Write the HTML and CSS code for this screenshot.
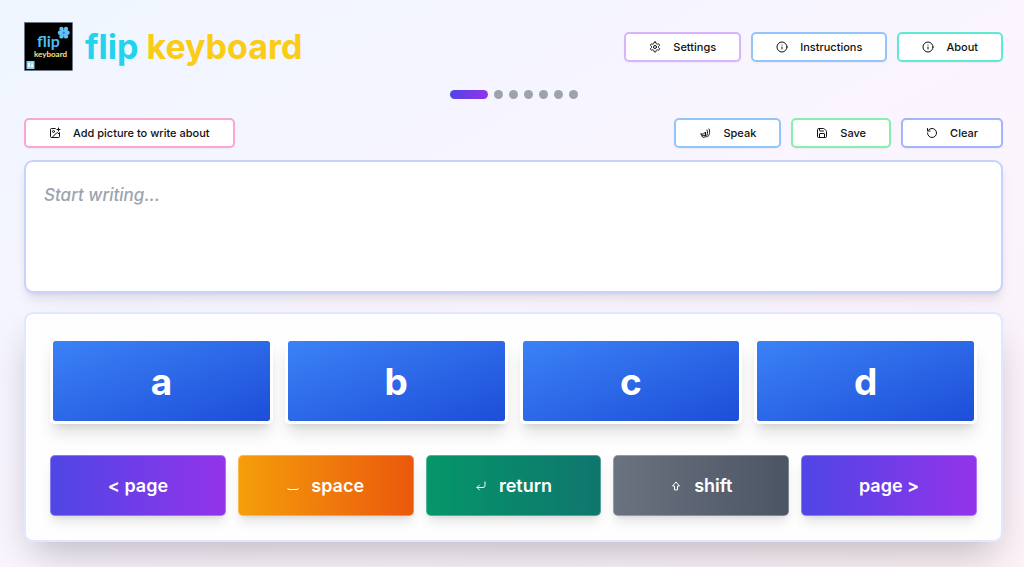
FILE: index.html
```html
<!DOCTYPE html>
<html lang="en">
<head>
  <meta charset="UTF-8">
  <meta name="viewport" content="width=device-width, initial-scale=1">
  <title>flip keyboard</title>
  <link rel="stylesheet" href="styles.css">
</head>
<body>

  <header>
    <div class="brand">
      <svg class="logo" viewBox="0 0 49 49" role="img" aria-label="flip keyboard logo">
        <rect x=".5" y=".5" width="48" height="48" fill="#000" stroke="#64748b" stroke-width=".6"/>
        <g fill="#60c3f5">
          <circle cx="37.5" cy="7" r="2.2"/>
          <circle cx="42" cy="7" r="2.2"/>
          <circle cx="43.500" cy="10.800" r="2.2"/>
          <circle cx="42" cy="14.400" r="2.2"/>
          <circle cx="37.500" cy="14.400" r="2.2"/>
          <circle cx="36" cy="10.800" r="2.2"/>
          <circle cx="39.800" cy="10.800" r="3"/>
        </g>
        <circle cx="39.800" cy="10.800" r="1.200" fill="#6366f1"/>
        <text class="logo-flip" x="13" y="25">flip</text>
        <text class="logo-keyboard" x="10" y="35">keyboard</text>
        <rect x="2.500" y="39" width="8" height="8" fill="#8ed3f7"/>
        <path d="M4 45V41h2v4zM7 45l1-5 1.500 5z" fill="#fff"/>
        <path d="M5 46l1-2 1 2z" fill="#f0c46a"/>
      </svg>
      <h1><span class="flip">flip</span> <span class="keyboard">keyboard</span></h1>
    </div>
    <nav class="controls">
      <button type="button" class="btn purple">
        <svg class="icon" viewBox="0 0 24 24"><path d="M12.220 2h-.44a2 2 0 0 0-2 2v.18a2 2 0 0 1-1 1.730l-.43.25a2 2 0 0 1-2 0l-.15-.08a2 2 0 0 0-2.730.73l-.22.38a2 2 0 0 0 .73 2.730l.15.1a2 2 0 0 1 1 1.720v.51a2 2 0 0 1-1 1.740l-.15.09a2 2 0 0 0-.73 2.730l.22.38a2 2 0 0 0 2.730.73l.15-.08a2 2 0 0 1 2 0l.43.25a2 2 0 0 1 1 1.730V20a2 2 0 0 0 2 2h.44a2 2 0 0 0 2-2v-.18a2 2 0 0 1 1-1.730l.43-.25a2 2 0 0 1 2 0l.15.08a2 2 0 0 0 2.730-.73l.22-.39a2 2 0 0 0-.73-2.730l-.15-.08a2 2 0 0 1-1-1.740v-.5a2 2 0 0 1 1-1.740l.15-.09a2 2 0 0 0 .73-2.730l-.22-.38a2 2 0 0 0-2.730-.73l-.15.08a2 2 0 0 1-2 0l-.43-.25a2 2 0 0 1-1-1.730V4a2 2 0 0 0-2-2z"/><circle cx="12" cy="12" r="3"/></svg>
        Settings
      </button>
      <button type="button" class="btn blue">
        <svg class="icon" viewBox="0 0 24 24"><circle cx="12" cy="12" r="10"/><path d="M12 16v-4M12 8h.01"/></svg>
        Instructions
      </button>
      <button type="button" class="btn teal">
        <svg class="icon" viewBox="0 0 24 24"><circle cx="12" cy="12" r="10"/><path d="M12 16v-4M12 8h.01"/></svg>
        About
      </button>
    </nav>
  </header>

  <main>
    <!-- Page indicator -->
    <div class="dots">
      <span class="active"></span><span></span><span></span><span></span><span></span><span></span><span></span>
    </div>

    <div class="toolbar">
      <button type="button" class="btn pink">
        <svg class="icon" viewBox="0 0 24 24"><path d="M16 5h6M19 2v6M21 11.500V19a2 2 0 0 1-2 2H5a2 2 0 0 1-2-2V5a2 2 0 0 1 2-2h7.500"/><path d="m21 15-3.090-3.090a2 2 0 0 0-2.820 0L6 21"/><circle cx="9" cy="9" r="2"/></svg>
        Add picture to write about
      </button>
      <div class="controls">
        <button type="button" class="btn blue">
          <svg class="icon" viewBox="0 0 24 24"><path d="M4 14h5l4-4v6c0 3-2 5-4 5s-3-2-3-4M4 14l3 4 6-2M16 6c2 5 1 10-2 14M20 4c3 6 1 12-3 16"/></svg>
          Speak
        </button>
        <button type="button" class="btn green">
          <svg class="icon" viewBox="0 0 24 24"><path d="M15.200 3a2 2 0 0 1 1.400.6l3.800 3.800a2 2 0 0 1 .6 1.400V19a2 2 0 0 1-2 2H5a2 2 0 0 1-2-2V5a2 2 0 0 1 2-2z"/><path d="M17 21v-7a1 1 0 0 0-1-1H8a1 1 0 0 0-1 1v7M7 3v4a1 1 0 0 0 1 1h7"/></svg>
          Save
        </button>
        <button type="button" class="btn indigo">
          <svg class="icon" viewBox="0 0 24 24"><path d="M3 12a9 9 0 1 0 9-9 9.750 9.750 0 0 0-6.740 2.740L3 8"/><path d="M3 3v5h5"/></svg>
          Clear
        </button>
      </div>
    </div>

    <textarea aria-label="Your writing" placeholder="Start writing..."></textarea>

    <section class="panel">
      <div class="letters">
        <button type="button">a</button>
        <button type="button">b</button>
        <button type="button">c</button>
        <button type="button">d</button>
      </div>
      <div class="actions">
        <button type="button" class="page">&lt; page</button>
        <button type="button" class="space">
          <svg class="icon" viewBox="0 0 24 24"><path d="M22 17v1c0 .5-.5 1-1 1H3c-.5 0-1-.5-1-1v-1"/></svg>
          space
        </button>
        <button type="button" class="return">
          <svg class="icon" viewBox="0 0 24 24"><path d="M20 4v7a4 4 0 0 1-4 4H4"/><path d="m9 10-5 5 5 5"/></svg>
          return
        </button>
        <button type="button" class="shift">
          <svg class="icon" viewBox="0 0 24 24"><path d="M9 19v-7H5l7-8 7 8h-4v7z"/></svg>
          shift
        </button>
        <button type="button" class="page">page &gt;</button>
      </div>
    </section>
  </main>

</body>
</html>
```
FILE: styles.css
```css
* { box-sizing: border-box; }
body {
  margin: 0;
  min-height: 100vh;
  padding: 22px 21px 26px 24px;
  font-family: Inter, "Liberation Sans", sans-serif;
  background: linear-gradient(to bottom right, #eff6ff, #faf5ff, #fdf2f8);
  color: #111;
}
button, textarea { font-family: inherit; }
button {
  display: flex;
  align-items: center;
  justify-content: center;
  gap: 12px;
  cursor: pointer;
}
.icon {
  width: 12px;
  height: 12px;
  flex: none;
  fill: none;
  stroke: currentColor;
  stroke-width: 2;
  stroke-linecap: round;
  stroke-linejoin: round;
}
header, .toolbar {
  display: flex;
  flex-wrap: wrap;
  align-items: center;
  justify-content: space-between;
  gap: 12px;
}
.brand {
  display: flex;
  align-items: center;
  gap: 12px;
}
.logo {
  width: 49px;
  height: 49px;
}
.logo-flip {
  font: bold 16px Lato, sans-serif;
  fill: #4dbcf5;
}
.logo-keyboard {
  font: bold 8px Lato, sans-serif;
  fill: #fbe38e;
}
h1 {
  margin: 0;
  font-size: 34px;
  line-height: 48px;
  font-weight: 700;
}
.flip { color: #22d3ee; }
.keyboard { color: #facc15; }
.controls {
  display: flex;
  gap: 10px;
}
.btn {
  height: 30px;
  padding: 0 23px;
  border: 2px solid;
  border-radius: 5px;
  background: #fff;
  color: #111;
  font-size: 11px;
  font-weight: 500;
  box-shadow: 0 1px 2px rgba(0,0,0,0.05);
}
.purple { border-color: #d8b4fe; }
.blue { border-color: #93c5fd; }
.teal { border-color: #5eead4; }
.pink { border-color: #f9a8d4; }
.green { border-color: #86efac; }
.indigo { border-color: #a5b4fc; }
.dots {
  display: flex;
  justify-content: center;
  gap: 6px;
  margin: 19px 0;
}
.dots span {
  width: 9px;
  height: 9px;
  border-radius: 5px;
  background: #9ca3af;
}
.dots .active {
  width: 38px;
  background: linear-gradient(to right, #4f46e5, #9333ea);
}
textarea {
  display: block;
  width: 100%;
  height: 133px;
  margin: 12px 0 19px;
  padding: 18px;
  border: 2px solid #c7d2fe;
  border-radius: 9px;
  background: #fff;
  font-size: 17px;
  font-weight: 500;
  line-height: 30px;
  resize: none;
  box-shadow: 0 8px 12px -2px rgba(0,0,0,0.1), 0 3px 5px -3px rgba(0,0,0,0.1);
}
textarea::placeholder {
  color: #9ca3af;
  font-style: italic;
}
.panel {
  padding: 24px;
  border: 2px solid #e0e7ff;
  border-radius: 9px;
  background: rgba(255,255,255,0.9);
  background-clip: padding-box;
  box-shadow: 0 19px 38px -9px rgba(0,0,0,0.25);
}
.letters, .actions {
  display: grid;
  gap: 12px;
}
.letters {
  grid-template-columns: repeat(4, 1fr);
  margin-bottom: 31px;
}
.actions { grid-template-columns: repeat(5, 1fr); }
.letters button {
  height: 86px;
  border: 3px solid #fff;
  border-radius: 5px;
  background: linear-gradient(to bottom right, #3b82f6, #1d4ed8) padding-box;
  color: #fff;
  font-size: 37px;
  font-weight: 700;
  box-shadow: 0 12px 16px -3px rgba(0,0,0,0.12), 0 5px 7px -4px rgba(0,0,0,0.1);
}
.actions button {
  height: 61px;
  padding: 0 12px;
  border: 1px solid rgba(255,255,255,0.3);
  border-radius: 5px;
  color: #fff;
  font-size: 18px;
  font-weight: 600;
  box-shadow: 0 8px 12px -2px rgba(0,0,0,0.1), 0 3px 5px -3px rgba(0,0,0,0.1);
}
.actions .page { background: linear-gradient(to right, #4f46e5, #9333ea) border-box; }
.actions .space { background: linear-gradient(to right, #f59e0b, #ea580c) border-box; }
.actions .return { background: linear-gradient(to right, #059669, #0f766e) border-box; }
.actions .shift { background: linear-gradient(to right, #6b7280, #4b5563) border-box; }
```
